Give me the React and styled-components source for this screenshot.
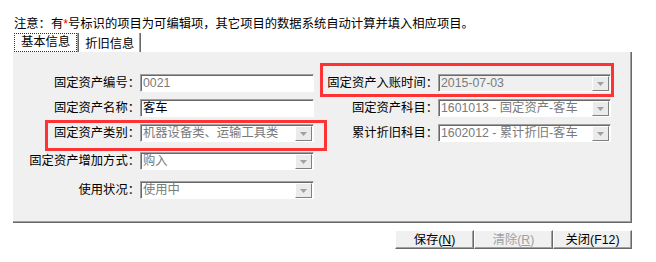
import React from "react";
import styled, { createGlobalStyle } from "styled-components";

const GlobalStyle = createGlobalStyle`
  body {
    margin: 0;
    background: #fff;
    font-family: "Liberation Sans", "Noto Sans CJK SC", sans-serif;
    font-size: 12.3px;
    color: #000;
  }
`;

function App() {
  return (
    <Page>
      <GlobalStyle />
      <Note>
        注意：有<Star>*</Star>号标识的项目为可编辑项，其它项目的数据系统自动计算并填入相应项目。
      </Note>
      <TabBar>
        <Tab $active>
          <Focus>基本信息</Focus>
        </Tab>
        <Tab>折旧信息</Tab>
      </TabBar>
      <Panel>
        <Row>
          <Field label="固定资产编号：" value="0021" muted />
          <Field right label="固定资产入账时间：" value="2015-07-03" muted select disabled />
        </Row>
        <Row $gap={7}>
          <Field label="固定资产名称：" value="客车" />
          <Field right label="固定资产科目：" value="1601013 - 固定资产-客车" muted select />
        </Row>
        <Row $gap={7}>
          <Field label="固定资产类别：" value="机器设备类、运输工具类" muted select />
          <Field right label="累计折旧科目：" value="1602012 - 累计折旧-客车" muted select />
        </Row>
        <Row $gap={10}>
          <Field label="固定资产增加方式：" value="购入" muted select />
        </Row>
        <Row $gap={11}>
          <Field label="使用状况：" value="使用中" muted select />
        </Row>
      </Panel>
      <ButtonBar>
        <Button>
          保存(<u>N</u>)
        </Button>
        <Button disabled>
          清除(<u>R</u>)
        </Button>
        <Button>关闭(F12)</Button>
      </ButtonBar>
      <Highlight $x={320} $y={63} $w={294} $h={34} />
      <Highlight $x={45} $y={120} $w={282} $h={31} />
    </Page>
  );
}

function Field({ label, value, muted, select, disabled, right }) {
  return (
    <FieldWrap>
      <Label $w={right ? 124 : 127}>{label}</Label>
      <Box $w={right ? 173 : 174} $muted={muted} $disabled={disabled}>
        <Value>{value}</Value>
        {select && (
          <DropButton>
            <svg width="7" height="4" viewBox="0 0 7 4">
              <path d="M0 0h7L3.5 4z" fill="#a0a0a0" />
            </svg>
          </DropButton>
        )}
      </Box>
    </FieldWrap>
  );
}

const Page = styled.div`
  position: relative;
  width: 656px;
  height: 262px;
  overflow: hidden;
`;

const Note = styled.div`
  padding: 16px 0 0 14px;
  line-height: 16px;
  white-space: nowrap;
`;

const Star = styled.span`
  color: #e00;
`;

const TabBar = styled.div`
  display: flex;
  height: 19px;
  margin-top: 1px;
  padding-left: 14px;
`;

const Tab = styled.div`
  display: flex;
  align-items: center;
  padding: ${(p) => (p.$active ? "0 1px 0 0" : "2px 6px 0")};
  border-right: 1px solid #696969;
  box-shadow: inset -1px 0 #a0a0a0;
  line-height: 16px;
  white-space: nowrap;
`;

const Focus = styled.span`
  border: 1px dotted #333;
  padding: 0 6px;
  line-height: 17px;
`;

const Panel = styled.div`
  box-sizing: border-box;
  width: 619px;
  height: 171px;
  margin-left: 13px;
  padding-top: 22px;
  background: #f0f0f0;
  border-right: 1px solid #696969;
  border-bottom: 1px solid #696969;
  box-shadow: inset -1px -1px #a0a0a0;
`;

const Row = styled.div`
  display: flex;
  margin-top: ${(p) => p.$gap || 0}px;
`;

const FieldWrap = styled.div`
  display: flex;
  align-items: center;
`;

const Label = styled.div`
  width: ${(p) => p.$w}px;
  text-align: right;
  white-space: nowrap;
  line-height: 18px;
`;

const Box = styled.div`
  box-sizing: border-box;
  display: flex;
  align-items: center;
  width: ${(p) => p.$w}px;
  height: 18px;
  padding: 0 1px 0 2px;
  border: 1px solid;
  border-color: #a0a0a0 #fff #fff #a0a0a0;
  box-shadow: inset 1px 1px #696969;
  background: ${(p) => (p.$disabled ? "#f0f0f0" : "#fff")};
  color: ${(p) => (p.$muted ? "#7a7a7a" : "#000")};
`;

const Value = styled.span`
  flex: 1;
  line-height: 16px;
  white-space: nowrap;
  overflow: hidden;
`;

const DropButton = styled.div`
  box-sizing: border-box;
  display: flex;
  align-items: center;
  justify-content: center;
  width: 17px;
  height: 15px;
  margin-top: 1px;
  background: #ebebeb;
  border: 1px solid;
  border-color: #fff #808080 #808080 #fff;
`;

const ButtonBar = styled.div`
  display: flex;
  justify-content: flex-end;
  margin-top: 7px;
  padding-right: 24px;
`;

const Button = styled.button`
  box-sizing: border-box;
  width: 79px;
  height: 19px;
  padding: 0;
  background: #f0f0f0;
  border: 1px solid;
  border-color: #fff #696969 #696969 #fff;
  box-shadow: inset -1px -1px #a0a0a0;
  font: inherit;
  line-height: 16px;
  color: ${(p) => (p.disabled ? "#a0a0a0" : "#000")};

  u {
    text-decoration-thickness: 1px;
  }
`;

const Highlight = styled.div`
  position: absolute;
  box-sizing: border-box;
  left: ${(p) => p.$x}px;
  top: ${(p) => p.$y}px;
  width: ${(p) => p.$w}px;
  height: ${(p) => p.$h}px;
  border: 3px solid #f33;
  pointer-events: none;
`;

export default App;
